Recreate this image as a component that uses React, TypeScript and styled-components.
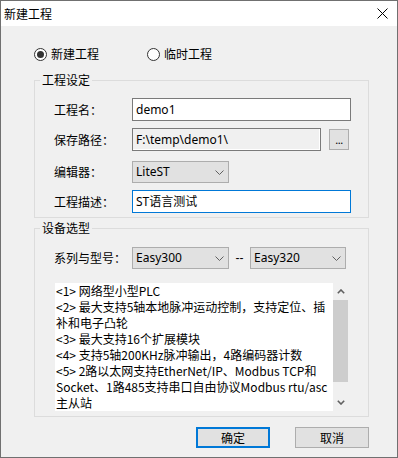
import React from "react";
import styled, { createGlobalStyle } from "styled-components";

const Global = createGlobalStyle`
  html, body { margin: 0; padding: 0; background: #fff; }
  body { font-family: "Noto Sans", "Noto Sans CJK SC", sans-serif; font-size: 12px; color: #000; }
  * { box-sizing: border-box; }
`;

const UI_FONT = `"Noto Sans", "Noto Sans CJK SC", sans-serif`;
const CJK_FONT = `"Noto Sans CJK SC", sans-serif`;

const Window = styled.div`
  width: 398px;
  height: 458px;
  border: 1px solid #707070;
  background: #f0f0f0;
  display: flex;
  flex-direction: column;
  overflow: hidden;
`;

const TitleBar = styled.div`
  height: 25px;
  flex: none;
  background: #fff;
  display: flex;
  align-items: center;
  justify-content: space-between;
  padding: 0 9px 0 3px;
`;

const TitleText = styled.span`
  font-family: ${CJK_FONT};
  font-size: 12px;
  line-height: 16px;
`;

const Body = styled.div`
  flex: 1;
  padding: 20px 28px 0 33px;
  display: flex;
  flex-direction: column;
`;

const RadioRow = styled.div`
  height: 16px;
  display: flex;
  align-items: center;
`;

const RadioItem = styled.label<{ $offset?: number }>`
  display: flex;
  align-items: center;
  margin-left: ${(p) => p.$offset ?? 0}px;
  font-family: ${CJK_FONT};
  font-size: 12px;
  line-height: 16px;
`;

const RadioCircle = styled.span<{ $checked?: boolean }>`
  width: 13px;
  height: 13px;
  border-radius: 50%;
  border: 1px solid #333;
  background: #fff;
  display: flex;
  align-items: center;
  justify-content: center;
  margin-right: 4px;
  &::after {
    content: "";
    display: ${(p) => (p.$checked ? "block" : "none")};
    width: 7px;
    height: 7px;
    border-radius: 50%;
    background: #333;
  }
`;

const Group = styled.fieldset<{ $top: number }>`
  margin: ${(p) => p.$top}px 0 0 0;
  padding: 0;
  border: 1px solid #dcdcdc;
  width: 335px;
  min-width: 0;
`;

const Legend = styled.legend`
  margin-left: 5px;
  padding: 0 2px;
  font-family: ${CJK_FONT};
  font-size: 12px;
  line-height: 16px;
`;

const GroupInner = styled.div<{ $pt: number; $pb: number }>`
  padding: ${(p) => p.$pt}px 0 ${(p) => p.$pb}px 19px;
  display: flex;
  flex-direction: column;
`;

const Row = styled.div<{ $mt?: number }>`
  display: flex;
  align-items: center;
  margin-top: ${(p) => p.$mt ?? 0}px;
`;

const Label = styled.span`
  width: 78px;
  flex: none;
  font-family: ${CJK_FONT};
  font-size: 12px;
  line-height: 16px;
`;

const Field = styled.div<{ $w: number; $variant?: "normal" | "readonly" | "focused" }>`
  width: ${(p) => p.$w}px;
  height: 23px;
  flex: none;
  border: 1px solid ${(p) => (p.$variant === "focused" ? "#0078d7" : "#7a7a7a")};
  background: ${(p) => (p.$variant === "readonly" ? "#f0f0f0" : "#fff")};
  box-shadow: ${(p) => (p.$variant === "readonly" ? "inset -1px -1px 0 #fff" : "none")};
  padding-left: 3px;
  display: flex;
  align-items: center;
  font-family: ${UI_FONT};
  font-size: 12px;
  line-height: 16px;
  white-space: nowrap;
  overflow: hidden;
`;

const BrowseButton = styled.div`
  width: 20px;
  height: 21px;
  flex: none;
  margin-left: 8px;
  border: 1px solid #adadad;
  background: #e1e1e1;
  display: flex;
  align-items: flex-end;
  justify-content: center;
  padding-bottom: 4px;
  font-family: ${UI_FONT};
  font-size: 11px;
  line-height: 11px;
  letter-spacing: -0.5px;
`;

const Combo = styled.div<{ $w: number }>`
  width: ${(p) => p.$w}px;
  height: 22px;
  flex: none;
  border: 1px solid #adadad;
  background: #e1e1e1;
  padding: 0 4px 0 3px;
  display: flex;
  align-items: center;
  justify-content: space-between;
  font-family: ${UI_FONT};
  font-size: 12px;
  line-height: 16px;
`;

const Separator = styled.span`
  width: 21px;
  flex: none;
  text-align: center;
  font-family: "Liberation Sans", sans-serif;
  font-size: 12px;
`;

const Memo = styled.div`
  margin-top: 14px;
  margin-left: 1px;
  width: 294px;
  height: 128px;
  display: flex;
`;

const MemoText = styled.div`
  width: 278px;
  height: 128px;
  background: #fff;
  padding-left: 1px;
  overflow: hidden;
  font-family: ${CJK_FONT};
  font-size: 12px;
  line-height: 16px;
`;

const MemoLine = styled.div`
  height: 16px;
  white-space: nowrap;
`;

const ScrollBar = styled.div`
  width: 16px;
  height: 128px;
  display: flex;
  flex-direction: column;
  background: #f0f0f0;
`;

const ScrollButton = styled.div`
  height: 17px;
  flex: none;
  display: flex;
  align-items: center;
  justify-content: center;
`;

const ScrollTrack = styled.div`
  flex: 1;
`;

const ScrollThumb = styled.div`
  width: 15px;
  height: 82px;
  background: #cdcdcd;
`;

const ButtonRow = styled.div`
  margin-top: 10px;
  display: flex;
  justify-content: flex-end;
  gap: 25px;
`;

const DialogButton = styled.div<{ $primary?: boolean }>`
  width: 74px;
  height: 21px;
  border: ${(p) => (p.$primary ? "2px solid #0078d7" : "1px solid #adadad")};
  background: #e1e1e1;
  display: flex;
  align-items: center;
  justify-content: center;
  font-family: ${CJK_FONT};
  font-size: 12px;
  line-height: 16px;
`;

const Chevron = ({ up }: { up?: boolean }) => (
  <svg width="9" height="5" viewBox="0 0 9 5">
    <polyline
      points={up ? "0.5,4.5 4.5,0.5 8.5,4.5" : "0.5,0.5 4.5,4.5 8.5,0.5"}
      fill="none"
      stroke="#606060"
      strokeWidth="1"
    />
  </svg>
);

const ScrollArrow = ({ up }: { up?: boolean }) => (
  <svg width="8" height="5" viewBox="0 0 8 5">
    <polyline
      points={up ? "0.8,4.2 4,1 7.2,4.2" : "0.8,0.8 4,4 7.2,0.8"}
      fill="none"
      stroke="#606060"
      strokeWidth="1.6"
    />
  </svg>
);

const CloseIcon = () => (
  <svg width="11" height="11" viewBox="0 0 11 11">
    <path d="M0.5 0.5 L10.5 10.5 M10.5 0.5 L0.5 10.5" stroke="#000" strokeWidth="1" fill="none" />
  </svg>
);

const memoLines = [
  "<1> 网络型小型PLC",
  "<2> 最大支持5轴本地脉冲运动控制，支持定位、插",
  "补和电子凸轮",
  "<3> 最大支持16个扩展模块",
  "<4> 支持5轴200KHz脉冲输出，4路编码器计数",
  "<5> 2路以太网支持EtherNet/IP、Modbus TCP和",
  "Socket、1路485支持串口自由协议Modbus rtu/asc",
  "主从站",
];

export default function App() {
  return (
    <>
      <Global />
      <Window>
        <TitleBar>
          <TitleText>新建工程</TitleText>
          <CloseIcon />
        </TitleBar>
        <Body>
          <RadioRow>
            <RadioItem>
              <RadioCircle $checked />
              新建工程
            </RadioItem>
            <RadioItem $offset={48}>
              <RadioCircle />
              临时工程
            </RadioItem>
          </RadioRow>

          <Group $top={10}>
            <Legend>工程设定</Legend>
            <GroupInner $pt={10} $pb={4}>
              <Row>
                <Label>工程名：</Label>
                <Field $w={219}>demo1</Field>
              </Row>
              <Row $mt={7}>
                <Label>保存路径：</Label>
                <Field $w={189} $variant="readonly">F:\temp\demo1\</Field>
                <BrowseButton>...</BrowseButton>
              </Row>
              <Row $mt={10}>
                <Label>编辑器：</Label>
                <Combo $w={97}>
                  LiteST
                  <Chevron />
                </Combo>
              </Row>
              <Row $mt={7}>
                <Label>工程描述：</Label>
                <Field $w={219} $variant="focused">ST语言测试</Field>
              </Row>
            </GroupInner>
          </Group>

          <Group $top={2}>
            <Legend>设备选型</Legend>
            <GroupInner $pt={11} $pb={5}>
              <Row>
                <Label>系列与型号：</Label>
                <Combo $w={97}>
                  Easy300
                  <Chevron />
                </Combo>
                <Separator>--</Separator>
                <Combo $w={96}>
                  Easy320
                  <Chevron />
                </Combo>
              </Row>
              <Memo>
                <MemoText>
                  {memoLines.map((l, i) => (
                    <MemoLine key={i}>{l}</MemoLine>
                  ))}
                </MemoText>
                <ScrollBar>
                  <ScrollButton>
                    <ScrollArrow up />
                  </ScrollButton>
                  <ScrollTrack>
                    <ScrollThumb />
                  </ScrollTrack>
                  <ScrollButton>
                    <ScrollArrow />
                  </ScrollButton>
                </ScrollBar>
              </Memo>
            </GroupInner>
          </Group>

          <ButtonRow>
            <DialogButton $primary>确定</DialogButton>
            <DialogButton>取消</DialogButton>
          </ButtonRow>
        </Body>
      </Window>
    </>
  );
}
